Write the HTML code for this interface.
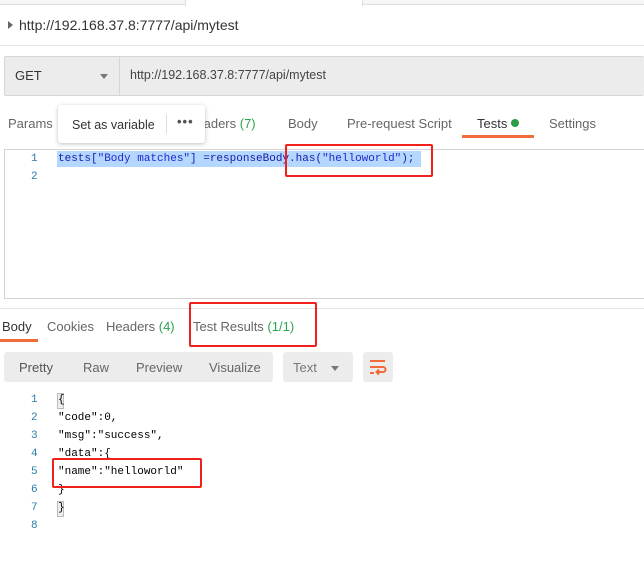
<!DOCTYPE html>
<html><head><meta charset="utf-8"><style>
*{margin:0;padding:0;box-sizing:border-box}
body{width:644px;height:580px;background:#fff;font-family:"Liberation Sans",sans-serif;font-size:13px;color:#333;position:relative;overflow:hidden}
.a{position:absolute;white-space:nowrap}
.mono{font-family:"Liberation Mono",monospace;font-size:11px}
.red{position:absolute;border:2.5px solid #f0201a;border-radius:2px}
.ln{position:absolute;color:#2a7fa8;font-family:"Liberation Mono",monospace;font-size:11px}
.g{color:#2da44e}
</style></head><body>
<div class="a" style="left:0;top:0;width:644px;height:5px;background:#f6f6f6;border-bottom:1px solid #e0e0e0"></div>
<div class="a" style="left:185px;top:0;width:178px;height:6px;background:#fff;border-left:1px solid #ddd;border-right:1px solid #ddd"></div>
<div class="a" style="left:8px;top:21px;width:0;height:0;border-left:5px solid #666;border-top:4px solid transparent;border-bottom:4px solid transparent"></div>
<div class="a" style="left:19px;top:17px;font-size:14px;color:#333">http://192.168.37.8:7777/api/mytest</div>
<div class="a" style="left:0;top:45px;width:644px;height:1px;background:#e2e2e2"></div>
<div class="a" style="left:4px;top:56px;width:640px;height:40px;background:#ececec;border:1px solid #d6d6d6;border-right:none;border-radius:2px"></div>
<div class="a" style="left:119px;top:56px;width:1px;height:40px;background:#d6d6d6"></div>
<div class="a" style="left:15px;top:68px;font-size:13px;color:#333">GET</div>
<div class="a" style="left:100px;top:74px;width:0;height:0;border-top:5px solid #777;border-left:4px solid transparent;border-right:4px solid transparent"></div>
<div class="a" style="left:130px;top:68px;font-size:12.5px;color:#444">http://192.168.37.8:7777/api/mytest</div>
<div class="a" style="left:8px;top:116px;color:#666">Params</div>
<div class="a" style="left:187px;top:116px;color:#666">Headers <span class="g">(7)</span></div>
<div class="a" style="left:288px;top:116px;color:#666">Body</div>
<div class="a" style="left:347px;top:116px;color:#666">Pre-request Script</div>
<div class="a" style="left:477px;top:116px;color:#333">Tests <span style="display:inline-block;width:8px;height:8px;border-radius:50%;background:#2a9d48;vertical-align:1px"></span></div>
<div class="a" style="left:549px;top:116px;color:#666">Settings</div>
<div class="a" style="left:462px;top:135px;width:72px;height:3px;background:#f26b3a"></div>
<div class="a" style="left:58px;top:105px;width:147px;height:38px;background:#fff;border-radius:3px;box-shadow:0 1px 4px rgba(0,0,0,.25)"></div>
<div class="a" style="left:72px;top:118px;font-size:12.5px;color:#333">Set as variable</div>
<div class="a" style="left:166px;top:114px;width:1px;height:20px;background:#ddd"></div>
<div class="a" style="left:177px;top:114px;font-size:13px;color:#555;letter-spacing:1px;font-weight:bold">•••</div>
<div class="a" style="left:4px;top:149px;width:640px;height:150px;border:1px solid #d4d4d4;border-right:none"></div>
<div class="ln" style="left:31px;top:153px">1</div>
<div class="ln" style="left:31px;top:171px">2</div>
<div class="a" style="left:57px;top:151px;width:364px;height:16px;background:#b3d7ff"></div>
<div class="a mono" style="left:58px;top:153px;color:#1a1aa6">tests[<span style="color:#2727c8">"Body matches"</span>] =responseBody.has(<span style="color:#2727c8">"helloworld"</span>);</div>
<div class="red" style="left:285px;top:144px;width:148px;height:33px"></div>
<div class="a" style="left:0;top:308px;width:644px;height:1px;background:#e5e5e5"></div>
<div class="a" style="left:2px;top:319px;color:#333">Body</div>
<div class="a" style="left:47px;top:319px;color:#666">Cookies</div>
<div class="a" style="left:106px;top:319px;color:#666">Headers <span class="g">(4)</span></div>
<div class="a" style="left:193px;top:319px;color:#666">Test Results <span class="g">(1/1)</span></div>
<div class="a" style="left:0;top:339px;width:38px;height:3px;background:#f26b3a"></div>
<div class="red" style="left:189px;top:302px;width:128px;height:45px"></div>
<div class="a" style="left:4px;top:352px;width:269px;height:30px;background:#ececec;border-radius:3px"></div>
<div class="a" style="left:19px;top:360px;color:#555">Pretty</div>
<div class="a" style="left:83px;top:360px;color:#666">Raw</div>
<div class="a" style="left:136px;top:360px;color:#666">Preview</div>
<div class="a" style="left:209px;top:360px;color:#666">Visualize</div>
<div class="a" style="left:283px;top:352px;width:70px;height:30px;background:#ececec;border-radius:3px"></div>
<div class="a" style="left:293px;top:360px;color:#777">Text</div>
<div class="a" style="left:331px;top:366px;width:0;height:0;border-top:5px solid #777;border-left:4px solid transparent;border-right:4px solid transparent"></div>
<div class="a" style="left:363px;top:352px;width:30px;height:30px;background:#ececec;border-radius:3px"></div>
<svg class="a" style="left:368px;top:358px" width="20" height="18" viewBox="0 0 20 18"><g stroke="#f26b3a" stroke-width="2" fill="none"><path d="M2 3h15M2 9h13a2.5 2.5 0 0 1 0 5H9M2 15h4"/><path d="M11 11.5l-2.5 2.5 2.5 2.5"/></g></svg>
<div class="ln" style="left:31px;top:394px">1</div>
<div class="ln" style="left:31px;top:412px">2</div>
<div class="ln" style="left:31px;top:430px">3</div>
<div class="ln" style="left:31px;top:448px">4</div>
<div class="ln" style="left:31px;top:466px">5</div>
<div class="ln" style="left:31px;top:484px">6</div>
<div class="ln" style="left:31px;top:502px">7</div>
<div class="ln" style="left:31px;top:520px">8</div>
<div class="a" style="left:57px;top:393px;width:7px;height:16px;background:#eee;border:1px solid #bbb"></div>
<div class="a" style="left:57px;top:501px;width:7px;height:16px;background:#eee;border:1px solid #bbb"></div>
<div class="a mono" style="left:58px;top:394px;color:#000">{</div>
<div class="a mono" style="left:58px;top:412px;color:#000">"code":0,</div>
<div class="a mono" style="left:58px;top:430px;color:#000">"msg":"success",</div>
<div class="a mono" style="left:58px;top:448px;color:#000">"data":{</div>
<div class="a mono" style="left:58px;top:466px;color:#000">"name":"helloworld"</div>
<div class="a mono" style="left:58px;top:484px;color:#000">}</div>
<div class="a mono" style="left:58px;top:502px;color:#000">}</div>
<div class="red" style="left:52px;top:458px;width:150px;height:30px"></div>
</body></html>
